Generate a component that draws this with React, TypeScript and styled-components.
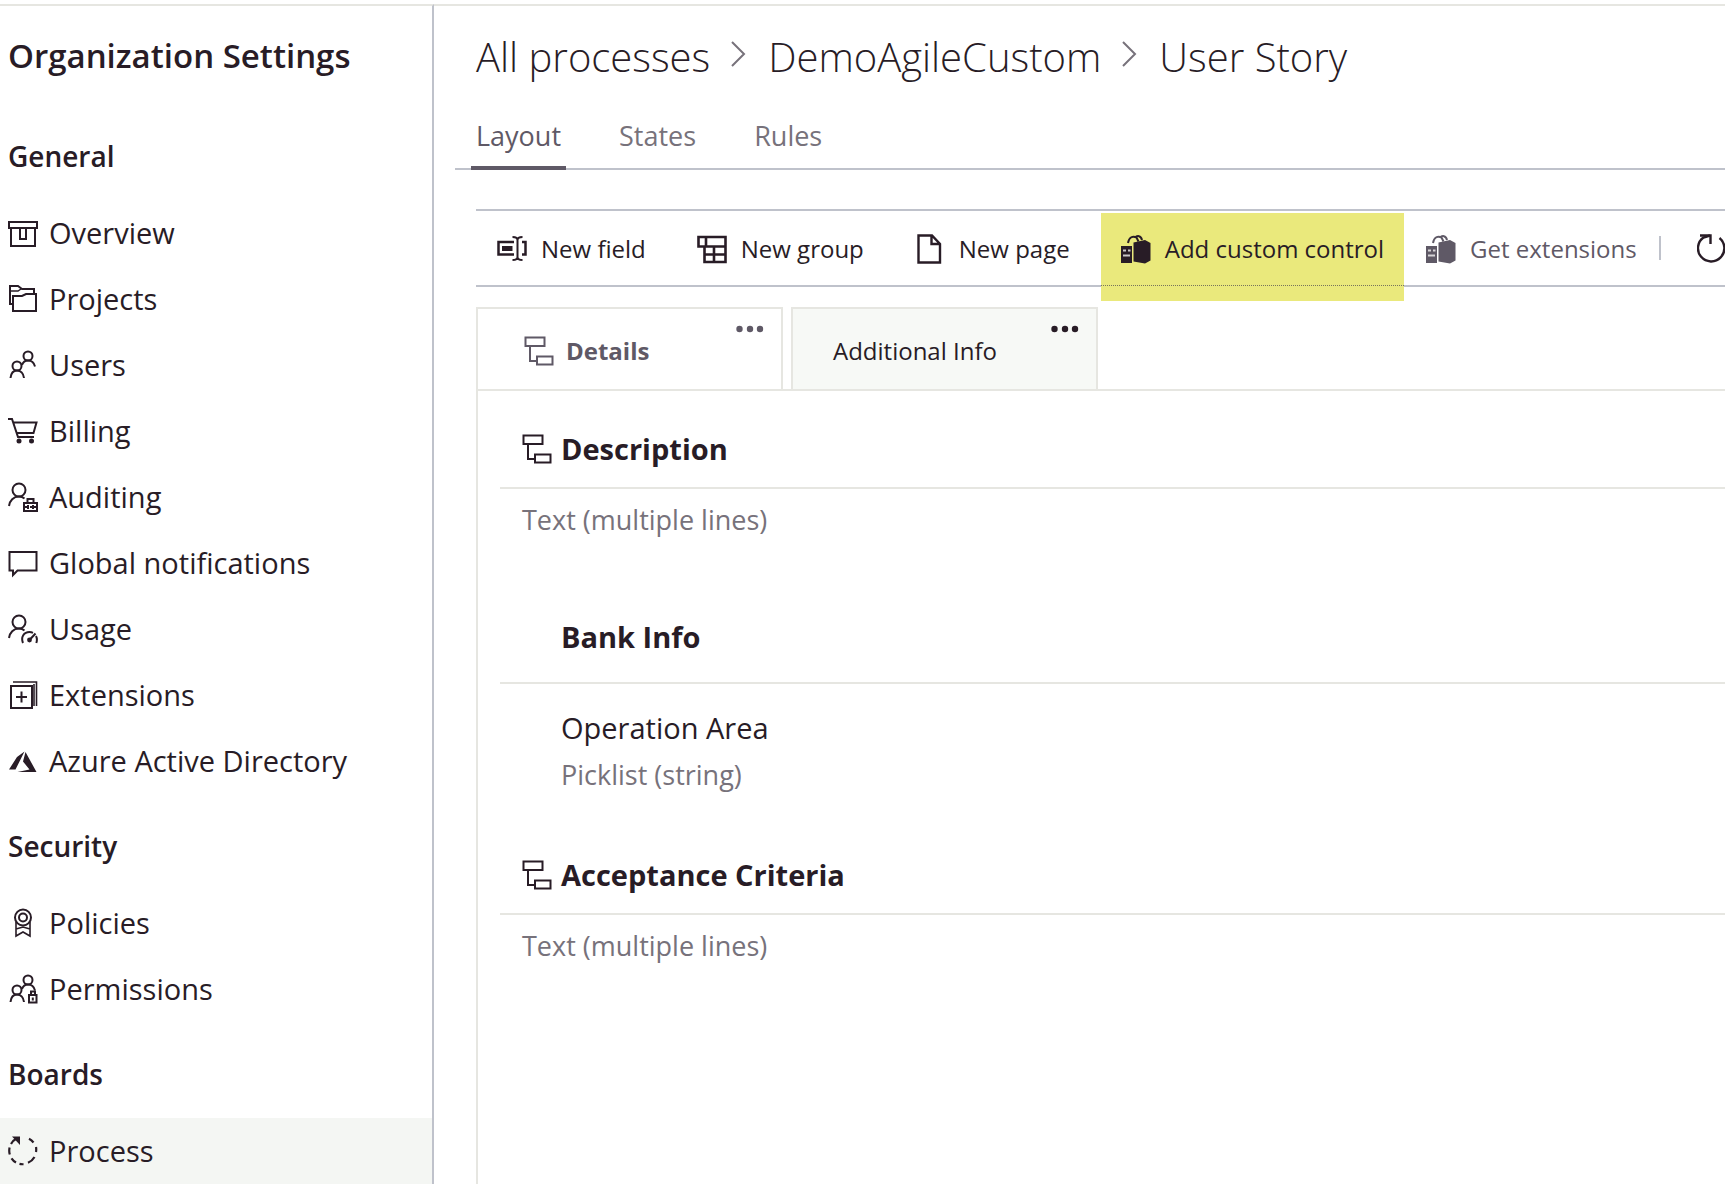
import React from "react";
import styled, { createGlobalStyle, css } from "styled-components";

const ink = "#281c26";
const muted = "#5f5966";
const faint = "#77727b";
const rule = "#bfc2cb";
const hairline = "#e6e6e1";
const shade = "#f4f6f3";
const paleShade = "#f7f9f6";

const GlobalStyle = createGlobalStyle`
  *, *::before, *::after { box-sizing: border-box; }
  html, body { margin: 0; background: #fff; }
  body { font-family: "Open Sans", "Noto Sans", sans-serif; color: ${ink}; overflow-x: hidden; }
  h1, h2, h3, p, ul, ol { margin: 0; padding: 0; font-weight: inherit; }
  ul, ol { list-style: none; }
  a { color: inherit; text-decoration: none; }
  button { font: inherit; color: inherit; background: none; border: 0; padding: 0; cursor: pointer; }
`;

const Page = styled.div`
  display: flex;
  min-height: 100vh;
  padding-top: 4px;
  overflow: hidden;
`;

const Sidebar = styled.aside`
  flex: 0 0 434px;
  border-top: 2px solid ${hairline};
  border-right: 2px solid ${rule};
`;

const SidebarTitle = styled.h1`
  padding: 26px 8px 24px;
  font-size: 33px;
  line-height: 48px;
  font-weight: 600;
  white-space: nowrap;
`;

const GroupTitle = styled.h2`
  padding: 32px 8px 24px;
  font-size: 28px;
  line-height: 40px;
  font-weight: 600;
`;

const NavLink = styled.a<{ $selected?: boolean }>`
  display: flex;
  align-items: center;
  gap: 11px;
  height: 66px;
  padding: 0 8px;
  font-size: 29px;
  line-height: 40px;
  white-space: nowrap;
  background: ${(p) => (p.$selected ? shade : "transparent")};
`;

const Main = styled.main`
  flex: 1;
  min-width: 0;
  display: flex;
  flex-direction: column;
  border-top: 2px solid ${hairline};
`;

const Breadcrumb = styled.ol`
  display: flex;
  align-items: center;
  gap: 20px;
  padding: 21px 0 0 42px;
  font-size: 40px;
  line-height: 60px;
  font-weight: 300;
  white-space: nowrap;

  li {
    display: flex;
    align-items: center;
    gap: 20px;
  }
`;

const Tabs = styled.nav`
  display: flex;
  gap: 48px;
  margin-left: 21px;
  padding: 25px 0 0 16px;
  border-bottom: 2px solid ${rule};
`;

const Tab = styled.a<{ $current?: boolean }>`
  height: 58px;
  margin-bottom: -2px;
  padding: 4px 5px 0;
  font-size: 27px;
  line-height: 40px;
  font-weight: ${(p) => (p.$current ? 500 : 400)};
  color: ${(p) => (p.$current ? muted : faint)};
  border-bottom: 4px solid ${(p) => (p.$current ? muted : "transparent")};
`;

const Toolbar = styled.div`
  display: flex;
  align-items: center;
  gap: 2px;
  margin: 39px 0 0 42px;
  padding-left: 1px;
  height: 78px;
  border-top: 2px solid ${rule};
  border-bottom: 2px solid ${rule};
`;

const CreateCommands = styled.div`
  display: flex;
  gap: 11px;
  margin-right: 9px;
`;

const Command = styled.button<{ $quiet?: boolean; $marked?: boolean }>`
  position: relative;
  isolation: isolate;
  display: flex;
  flex: none;
  align-items: center;
  gap: 14px;
  height: 74px;
  padding: 2px 20px 0;
  font-size: 24px;
  line-height: 36px;
  white-space: nowrap;
  color: ${(p) => (p.$quiet ? muted : ink)};

  ${(p) =>
    p.$marked &&
    css`
      &::before {
        content: "";
        position: absolute;
        z-index: -1;
        inset: 2px 0 -16px;
        background: #eae97c;
      }
      &::after {
        content: "";
        position: absolute;
        inset: auto 0 -1px;
        border-bottom: 1px dotted #77745c;
      }
    `}
`;

const Divider = styled.span`
  flex: none;
  width: 2px;
  height: 24px;
  margin-right: 14px;
  background: ${rule};
`;

const PageTabs = styled.div`
  display: flex;
  gap: 8px;
  margin: 20px 0 0 42px;
`;

const PageTab = styled.div<{ $active?: boolean }>`
  display: flex;
  justify-content: space-between;
  width: 307px;
  height: 82px;
  padding: 0 16px 0 ${(p) => (p.$active ? 46 : 40)}px;
  border: 2px solid ${hairline};
  border-bottom: 0;
  background: ${(p) => (p.$active ? "#fff" : paleShade)};
  color: ${(p) => (p.$active ? muted : ink)};
  font-weight: ${(p) => (p.$active ? 700 : 400)};
`;

const PageTabLabel = styled.button`
  display: flex;
  align-items: center;
  gap: 12px;
  padding-top: 4px;
  font-size: 24px;
  line-height: 36px;
  white-space: nowrap;
`;

const MoreButton = styled.button`
  align-self: flex-start;
  padding: 9px 0;
  line-height: 0;
`;

const Panel = styled.section`
  flex: 1;
  margin-left: 42px;
  padding: 20px 0 24px 22px;
  border-top: 2px solid ${hairline};
  border-left: 2px solid ${hairline};
`;

const Group = styled.section`
  margin-bottom: 43px;
`;

const GroupHeader = styled.h3<{ $tall?: boolean }>`
  display: flex;
  align-items: center;
  gap: 9px;
  padding: ${(p) => (p.$tall ? "36px 0 26px 22px" : "19px 0 19px 22px")};
  font-size: 29px;
  line-height: 38px;
  font-weight: 700;
  border-bottom: 2px solid ${hairline};
`;

const IconSlot = styled.span`
  flex: none;
  width: 30px;
  height: 30px;
`;

const Field = styled.div<{ $indent?: boolean }>`
  padding: ${(p) => (p.$indent ? "24px 0 0 61px" : "12px 0 0 22px")};
`;

const FieldName = styled.p`
  margin-bottom: 8px;
  font-size: 29px;
  line-height: 40px;
`;

const FieldType = styled.p`
  font-size: 27px;
  line-height: 38px;
  color: ${faint};
`;

const Glyph = styled.svg`
  flex: none;
  display: block;
  width: 30px;
  height: 30px;
  fill: none;
  stroke: currentColor;
  stroke-width: 2;
`;

const Icon = ({ children }: { children: React.ReactNode }) => (
  <Glyph viewBox="0 0 30 30" aria-hidden="true">
    {children}
  </Glyph>
);

const solid = { fill: "currentColor", stroke: "none" };

const OverviewIcon = () => (
  <Icon>
    <path d="M1 4h28v6H1zM3 10v18h24V10M12 10v11h6V10" />
  </Icon>
);
const ProjectsIcon = () => (
  <Icon>
    <path d="M5 20H2V2h8l4 3h12v5" />
    <path d="M2 7h8l3-2" strokeWidth="1.5" />
    <path d="M5 27V12h9l4-2h10v17z" />
  </Icon>
);
const pair = (
  <>
    <circle cx="20" cy="6" r="4.5" />
    <path d="M14 15c1-3 3-4.5 6-4.5s6 2 7 6" />
    <circle cx="9" cy="16" r="4.5" />
    <path d="M2.5 28c.5-4.5 3-7.5 6.5-7.5s6.5 3 7 7.5" />
  </>
);
const UsersIcon = () => <Icon>{pair}</Icon>;
const BillingIcon = () => (
  <Icon>
    <path d="M0 3h4l6 18h16M5.5 6.5h23L25.5 17H9" />
    <circle cx="11" cy="25" r="2.5" {...solid} />
    <circle cx="23.5" cy="25" r="2.5" {...solid} />
  </Icon>
);
const person = (
  <>
    <circle cx="11" cy="8" r="6.5" />
    <path d="M1 24c.7-5.5 4.5-9.5 10-9.5 2.5 0 4 .7 5.5 2" />
  </>
);
const AuditingIcon = () => (
  <Icon>
    {person}
    <path d="M16 21h13v8H16zM19.5 21v-4h6v4M16 25h4m2 0h2m2 0h3M20 23v4m5-4v4" />
  </Icon>
);
const NotificationsIcon = () => (
  <Icon>
    <path d="M1.5 4h27v18.500H9.5L5 27v-4.5H1.5z" />
  </Icon>
);
const UsageIcon = () => (
  <Icon>
    {person}
    <path d="M15 29c-2.500-6 1-11 6.500-11 1.500 0 2.500.3 3.500.8M28 22c1 2 1.200 4.500.3 7" />
    <circle cx="21.5" cy="26" r="2.4" {...solid} />
    <path d="M21.500 26l6-6.500" />
  </Icon>
);
const ExtensionsIcon = () => (
  <Icon>
    <path d="M3 6h21v22H3zM13.500 11.500v11M8 17h11" />
    <path d="M5 2h23.500v24M26 4v22" strokeWidth="1.6" />
  </Icon>
);
const AzureIcon = () => (
  <Icon>
    <path d="M1 23.500L9 11l7.500-5.500L7.500 23.500zM17.500 6L28.500 26H9.500l12-2.500-6.500-8z" {...solid} />
  </Icon>
);
const PoliciesIcon = () => (
  <Icon>
    <circle cx="15" cy="9.5" r="8" />
    <circle cx="15" cy="9.5" r="4" />
    <path d="M8 14v14l7-4 7 4V14M8 21l7-2 7 2" strokeWidth="1.6" />
  </Icon>
);
const PermissionsIcon = () => (
  <Icon>
    {pair}
    <path d="M20 20h10v9H20z" fill="#fff" stroke="none" />
    <path d="M21 21h7.500v7.500H21zM23 21v-3.500h4V21M24.800 23.500v3" />
  </Icon>
);
const ProcessIcon = () => (
  <Icon>
    <path d="M21 2.800a13.500 13.500 0 0 1 4.500 3.700M28 11a13.500 13.500 0 0 1 0 5M26.500 21a13.500 13.500 0 0 1-6.500 5.800M15.500 28.200a13.500 13.500 0 0 1-4-.3M8 26.500a13.500 13.500 0 0 1-4.500-4.200M1.800 18.500a13.500 13.500 0 0 1-.2-7M3 8a13.500 13.500 0 0 1 5.500-5.500" strokeWidth="2.2" />
    <path d="M4 .5h8V9z" {...solid} />
  </Icon>
);
const FieldIcon = () => (
  <Icon>
    <path d="M17 8H1.500v12.500H17M25 8h3.500v12.500H25" strokeWidth="2.5" />
    <path d="M5 12h10.500v5H5z" {...solid} />
    <path d="M15.500 3c3 0 5 .5 5 3v17c0 2.500-2 3-5 3M25.500 3c-3 0-5 .5-5 3v17c0 2.500 2 3 5 3" />
  </Icon>
);
const GroupIcon = () => (
  <Icon>
    <path d="M1.500 3h27v9.500h-27zM9 3v9.500M7.500 12.500v15.500h21V12.500M7.500 20.500h21M17 12.500V28" strokeWidth="2.6" />
  </Icon>
);
const NewPageIcon = () => (
  <Icon>
    <path d="M3.500 1.500H17L25 10v18.500H3.500zM16.500 1.500V10H25" strokeWidth="2.4" />
  </Icon>
);
const BagIcon = () => (
  <Icon>
    <path d="M0 12h11v17H0z" {...solid} />
    <path d="M2 16.500h3m2 0h2.500M2 21.500h7" stroke="#fff" strokeOpacity=".75" />
    <path d="M12.500 8.500L24 6l5.500 3v17.500l-5.500 3-11.500-2z" {...solid} />
    <path d="M7 9C8 3 12 1.500 15.500 3.500l2 4M14 4c2-3 6-2.500 7 2" />
  </Icon>
);
const RefreshIcon = () => (
  <Icon>
    <path d="M22.500 4a13.200 13.200 0 1 1-16-.5L13 1.500" strokeWidth="2.4" />
    <path d="M3 1.500h10.500V10" strokeWidth="2.4" />
  </Icon>
);
const TreeIcon = () => (
  <Icon>
    <path d="M1.500 1.500h19v8.500h-19zM13 20.500h15.500v8H13zM6 10v15h7" />
  </Icon>
);
const DotsIcon = () => (
  <Icon>
    <circle cx="4.5" cy="11" r="3.2" {...solid} />
    <circle cx="15" cy="11" r="3.2" {...solid} />
    <circle cx="25" cy="11" r="3.2" {...solid} />
  </Icon>
);

const ChevronGlyph = styled.svg`
  width: 18px;
  height: 30px;
  margin-top: -6px;
  fill: none;
  stroke: ${faint};
  stroke-width: 2;
`;
const Chevron = () => (
  <ChevronGlyph viewBox="0 0 18 30" aria-hidden="true">
    <path d="M2 3l12 12L2 27" />
  </ChevronGlyph>
);

const groups = [
  {
    title: "General",
    items: [
      ["Overview", OverviewIcon],
      ["Projects", ProjectsIcon],
      ["Users", UsersIcon],
      ["Billing", BillingIcon],
      ["Auditing", AuditingIcon],
      ["Global notifications", NotificationsIcon],
      ["Usage", UsageIcon],
      ["Extensions", ExtensionsIcon],
      ["Azure Active Directory", AzureIcon],
    ],
  },
  {
    title: "Security",
    items: [
      ["Policies", PoliciesIcon],
      ["Permissions", PermissionsIcon],
    ],
  },
  { title: "Boards", items: [["Process", ProcessIcon]] },
] as { title: string; items: [string, React.ComponentType][] }[];

export default function App() {
  return (
    <>
      <GlobalStyle />
      <Page>
        <Sidebar>
          <SidebarTitle>Organization Settings</SidebarTitle>
          {groups.map((group) => (
            <nav key={group.title} aria-label={group.title}>
              <GroupTitle>{group.title}</GroupTitle>
              <ul>
                {group.items.map(([label, ItemIcon]) => (
                  <li key={label}>
                    <NavLink href="#" $selected={label === "Process"}>
                      <ItemIcon />
                      {label}
                    </NavLink>
                  </li>
                ))}
              </ul>
            </nav>
          ))}
        </Sidebar>

        <Main>
          <Breadcrumb>
            <li>
              <a href="#">All processes</a>
              <Chevron />
            </li>
            <li>
              <a href="#">DemoAgileCustom</a>
              <Chevron />
            </li>
            <li>User Story</li>
          </Breadcrumb>

          <Tabs>
            <Tab href="#" $current>
              Layout
            </Tab>
            <Tab href="#">States</Tab>
            <Tab href="#">Rules</Tab>
          </Tabs>

          <Toolbar role="toolbar">
            <CreateCommands>
              <Command>
                <FieldIcon />
                New field
              </Command>
              <Command>
                <GroupIcon />
                New group
              </Command>
              <Command>
                <NewPageIcon />
                New page
              </Command>
            </CreateCommands>
            <Command $marked>
              <BagIcon />
              Add custom control
            </Command>
            <Command $quiet>
              <BagIcon />
              Get extensions
            </Command>
            <Divider />
            <Command aria-label="Refresh">
              <RefreshIcon />
            </Command>
          </Toolbar>

          <PageTabs>
            <PageTab $active>
              <PageTabLabel>
                <TreeIcon />
                Details
              </PageTabLabel>
              <MoreButton aria-label="More options for Details">
                <DotsIcon />
              </MoreButton>
            </PageTab>
            <PageTab>
              <PageTabLabel>Additional Info</PageTabLabel>
              <MoreButton aria-label="More options for Additional Info">
                <DotsIcon />
              </MoreButton>
            </PageTab>
          </PageTabs>

          <Panel>
            <Group>
              <GroupHeader>
                <TreeIcon />
                Description
              </GroupHeader>
              <Field>
                <FieldType>Text (multiple lines)</FieldType>
              </Field>
            </Group>
            <Group>
              <GroupHeader $tall>
                <IconSlot />
                Bank Info
              </GroupHeader>
              <Field $indent>
                <FieldName>Operation Area</FieldName>
                <FieldType>Picklist (string)</FieldType>
              </Field>
            </Group>
            <Group>
              <GroupHeader>
                <TreeIcon />
                Acceptance Criteria
              </GroupHeader>
              <Field>
                <FieldType>Text (multiple lines)</FieldType>
              </Field>
            </Group>
          </Panel>
        </Main>
      </Page>
    </>
  );
}
